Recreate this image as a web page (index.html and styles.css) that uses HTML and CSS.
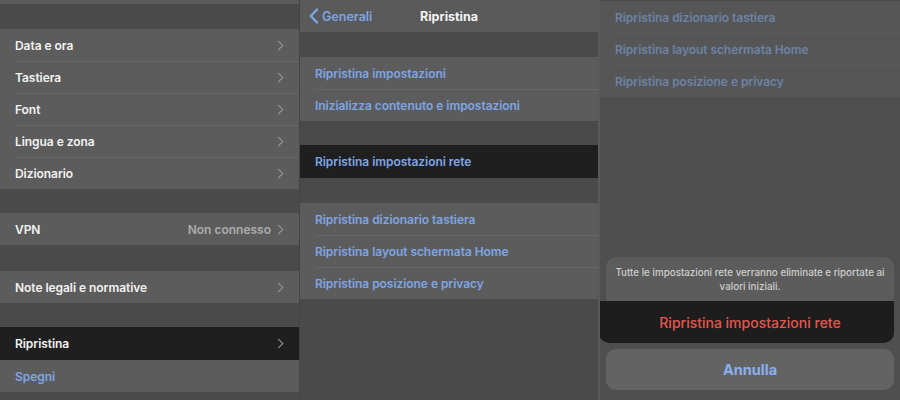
FILE: index.html
```html
<!DOCTYPE html>
<html lang="it">
<head>
<meta charset="utf-8">
<title>Ripristina</title>
<link rel="stylesheet" href="styles.css">
</head>
<body>
<div class="screens">
  <section class="panel p1">
    <div class="group"><div class="stub"></div></div>
    <div class="gap g25"></div>
    <div class="group">
      <div class="row"><span class="lbl">Data e ora</span><span class="chev"></span></div>
      <div class="row"><span class="lbl">Tastiera</span><span class="chev"></span></div>
      <div class="row"><span class="lbl">Font</span><span class="chev"></span></div>
      <div class="row"><span class="lbl">Lingua e zona</span><span class="chev"></span></div>
      <div class="row"><span class="lbl">Dizionario</span><span class="chev"></span></div>
    </div>
    <div class="gap g24"></div>
    <div class="group">
      <div class="row"><span class="lbl">VPN</span><span class="val">Non connesso</span><span class="chev"></span></div>
    </div>
    <div class="gap g26"></div>
    <div class="group">
      <div class="row"><span class="lbl">Note legali e normative</span><span class="chev"></span></div>
    </div>
    <div class="gap g24"></div>
    <div class="group">
      <div class="row pressed"><span class="lbl">Ripristina</span><span class="chev"></span></div>
      <div class="row"><span class="lbl blue">Spegni</span></div>
    </div>
  </section>

  <section class="panel p2">
    <header class="nav">
      <span class="back"><svg width="10" height="16" viewBox="0 0 10 16"><path d="M8 1.5 1.8 8 8 14.5" fill="none" stroke="currentColor" stroke-width="2.4" stroke-linecap="round" stroke-linejoin="round"/></svg>Generali</span>
      <span class="title">Ripristina</span>
    </header>
    <div class="gap g25"></div>
    <div class="group">
      <div class="row"><span class="lbl blue">Ripristina impostazioni</span></div>
      <div class="row"><span class="lbl blue">Inizializza contenuto e impostazioni</span></div>
    </div>
    <div class="gap g24"></div>
    <div class="group">
      <div class="row pressed tall"><span class="lbl blue">Ripristina impostazioni rete</span></div>
    </div>
    <div class="gap g25"></div>
    <div class="group">
      <div class="row"><span class="lbl blue">Ripristina dizionario tastiera</span></div>
      <div class="row"><span class="lbl blue">Ripristina layout schermata Home</span></div>
      <div class="row"><span class="lbl blue">Ripristina posizione e privacy</span></div>
    </div>
  </section>

  <section class="panel p3">
    <div class="group dim">
      <div class="row"><span class="lbl blue">Ripristina dizionario tastiera</span></div>
      <div class="row"><span class="lbl blue">Ripristina layout schermata Home</span></div>
      <div class="row"><span class="lbl blue">Ripristina posizione e privacy</span></div>
    </div>
    <div class="sheet">
      <div class="alert">
        <p class="msg">Tutte le impostazioni rete verranno eliminate e riportate ai valori iniziali.</p>
        <div class="destructive">Ripristina impostazioni rete</div>
      </div>
      <div class="cancel">Annulla</div>
    </div>
  </section>
</div>
</body>
</html>
```

FILE: styles.css
```css
html, body {
  margin: 0;
  padding: 0;
  background: #4a4a4a;
}
body {
  font-family: Inter, "Noto Sans", "Liberation Sans", sans-serif;
  -webkit-font-smoothing: antialiased;
}
.screens {
  display: flex;
  width: 900px;
  height: 400px;
  overflow: hidden;
}
.panel {
  width: 300px;
  height: 400px;
  display: flex;
  flex-direction: column;
  background: #4a4a4a;
  overflow: hidden;
}
.p1 { border-right: 1px solid #444; width: 299px; }
.p2 { border-right: 2px solid #5a5a5a; width: 298px; }
.p3 { background: #4f4f4f; }

.gap { flex: none; }
.g24 { height: 24px; }
.g25 { height: 25px; }
.g26 { height: 26px; }

.group { background: #5c5c5c; flex: none; }
.stub { height: 4px; }

.row {
  height: 32px;
  display: flex;
  align-items: center;
  padding: 0 15px;
  position: relative;
  box-sizing: border-box;
}
.row + .row::before {
  content: "";
  position: absolute;
  left: 15px;
  right: 0;
  top: 0;
  height: 1px;
  background: #676767;
}
.row.pressed { background: #1f1f1f; height: 33px; }
.row.pressed + .row::before, .row + .row.pressed::before { display: none; }

.lbl {
  flex: 1;
  font-size: 12px;
  font-weight: 600;
  color: #f2f2f2;
  letter-spacing: -0.05px;
}
.lbl.blue { color: #7ea5e4; }
.val {
  font-size: 12px;
  font-weight: 600;
  color: #acacac;
  margin-right: 4px;
}
.chev {
  width: 6px;
  height: 6px;
  border-top: 1.6px solid #9a9a9a;
  border-right: 1.6px solid #9a9a9a;
  transform: rotate(45deg);
  margin-right: 2px;
}

.nav {
  height: 32px;
  background: #5a5a5a;
  display: flex;
  align-items: center;
  position: relative;
  flex: none;
}
.back {
  display: flex;
  align-items: center;
  gap: 3px;
  color: #7ea5e4;
  font-size: 12.5px;
  font-weight: 600;
  padding-left: 9px;
}
.title {
  position: absolute;
  left: 0;
  right: 0;
  text-align: center;
  color: #f4f4f4;
  font-size: 12.5px;
  font-weight: 700;
  pointer-events: none;
}

.dim { background: #565656; border-top: 1px solid #4a4a4a; }
.dim .lbl.blue { color: #6c83a6; }
.dim .row + .row::before { background: #5c5c5c; }

.sheet {
  margin-top: auto;
  padding: 0 6px 10px 6px;
  display: flex;
  flex-direction: column;
  gap: 6px;
}
.alert {
  background: #5c5c5c;
  border-radius: 10px;
}
.msg {
  margin: 0;
  height: 44px;
  box-sizing: border-box;
  padding: 9px 6px 0;
  text-align: center;
  font-size: 9.8px;
  line-height: 14px;
  font-weight: 500;
  color: #cfcfcf;
}
.destructive {
  height: 42px;
  margin-left: -7px;
  background: #1d1d1d;
  border-radius: 0 0 10px 10px;
  display: flex;
  align-items: center;
  justify-content: center;
  padding-left: 7px;
  color: #e5574e;
  font-size: 14px;
  font-weight: 500;
}
.cancel {
  height: 41px;
  background: #636363;
  border-radius: 10px;
  display: flex;
  align-items: center;
  justify-content: center;
  color: #8ab0ee;
  font-size: 14.5px;
  font-weight: 700;
}
```
